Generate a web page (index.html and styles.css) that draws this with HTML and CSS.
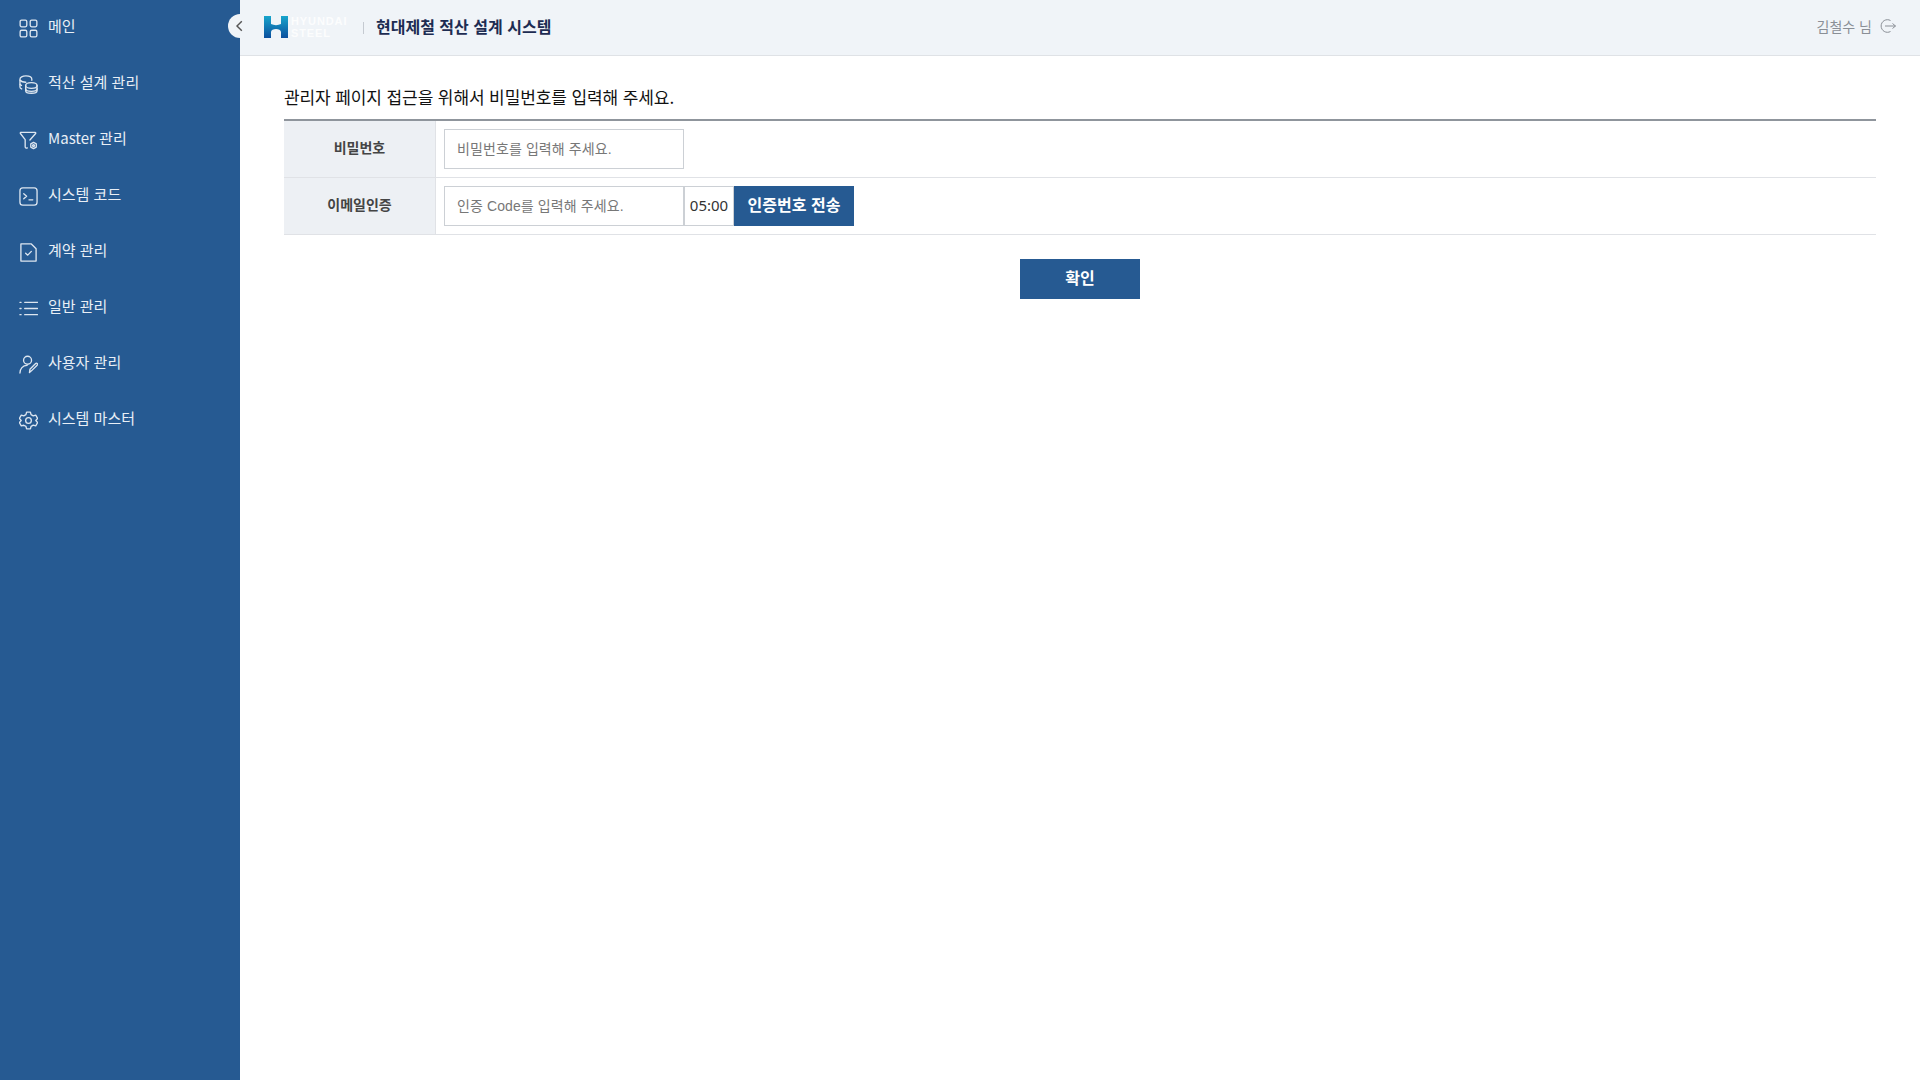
FILE: index.html
```html
<!DOCTYPE html>
<html lang="ko">
<head>
    <meta charset="UTF-8">
    <meta name="viewport" content="width=device-width, initial-scale=1.0">
    <title>현대제철 적산 설계 시스템</title>
    <link rel="stylesheet" href="styles.css">
</head>
<body>
    <div class="layout">
        <!-- Sidebar -->
        <nav class="sidebar">
            <a class="menu-item" href="#">
                <svg class="menu-icon" viewBox="0 0 20 20"><rect x="1.2" y="1.2" width="7" height="7" rx="1.5"/><rect x="11.8" y="1.2" width="7" height="7" rx="1.5"/><rect x="1.2" y="11.8" width="7" height="7" rx="1.5"/><rect x="11.8" y="11.8" width="7" height="7" rx="1.5"/></svg>
                <span>메인</span>
            </a>
            <a class="menu-item" href="#">
                <svg class="menu-icon" viewBox="0 0 20 20"><path d="M13.500 5.500V4.500C13.500 2.300 11 1 7.300 1S1 2.300 1 4.500v8c0 1 .8 1.800 1.800 2.200"/><path d="M1.200 5.500c1 1.300 3.300 2.100 6 2.100"/><path d="M1.200 9.800c.3.500.8.900 1.400 1.200"/><ellipse cx="13" cy="11" rx="6" ry="3"/><path d="M7 11v5.500c0 1.600 2.700 2.700 6 2.700s6-1.100 6-2.700V11"/><path d="M7 14.500c0 1.600 2.700 2.700 6 2.700s6-1.100 6-2.700"/></svg>
                <span>적산 설계 관리</span>
            </a>
            <a class="menu-item" href="#">
                <svg class="menu-icon" viewBox="0 0 20 20"><path d="M2 1.500h15c.6 0 .9.700.5 1.100L11.500 9.500"/><path d="M2 1.500c-.6 0-.9.700-.5 1.100L6.500 9v7.500c0 1.300 1 1.800 2.300 1.300"/><circle cx="15.300" cy="15.300" r="1"/><path d="M15.300 12l2.900 1.600v3.300l-2.900 1.600-2.900-1.600v-3.300z"/></svg>
                <span>Master 관리</span>
            </a>
            <a class="menu-item" href="#">
                <svg class="menu-icon" viewBox="0 0 20 20"><rect x="1" y="1" width="18" height="18" rx="3"/><path d="M5 7l3 2.700-3 2.700"/><path d="M10.500 13.500h4"/></svg>
                <span>시스템 코드</span>
            </a>
            <a class="menu-item" href="#">
                <svg class="menu-icon" viewBox="0 0 20 20"><path d="M2 1h11l5 5v13H2z"/><path d="M7 10.800l2.200 2 3.800-4"/></svg>
                <span>계약 관리</span>
            </a>
            <a class="menu-item" href="#">
                <svg class="menu-icon" viewBox="0 0 20 20"><path d="M1 3.500h1.200M1 10h1.200M1 16.500h1.200M6 3.500h13.500M6 10h13.500M6 16.500h13.500"/></svg>
                <span>일반 관리</span>
            </a>
            <a class="menu-item" href="#">
                <svg class="menu-icon" viewBox="0 0 20 20"><circle cx="9" cy="5.500" r="4.200"/><path d="M1 19c0-4.500 3-8 7.500-8"/><path d="M11 18.500l.5-3.500 6-6c.8-.8 2-.2 2 .8 0 .3-.1.600-.4.900l-6 6z"/></svg>
                <span>사용자 관리</span>
            </a>
            <a class="menu-item" href="#">
                <svg class="menu-icon" viewBox="0 0 20 20"><circle cx="10" cy="10" r="3"/><path d="M8 1.200h4l.7 2.600 2.300 1.300 2.600-.7 2 3.400-1.900 2.200 1.900 2.200-2 3.400-2.600-.7-2.300 1.300-.7 2.600H8l-.7-2.600L5 15l-2.600.7-2-3.400L2.300 10 .4 7.800l2-3.400L5 5.100l2.300-1.300z"/></svg>
                <span>시스템 마스터</span>
            </a>
        </nav>

        <div class="main">
            <!-- Header -->
            <header class="topbar">
                <div class="toggle-btn">
                    <svg viewBox="0 0 10 10"><path d="M6.500 1L2.500 5l4 4"/></svg>
                </div>
                <svg class="logo-mark" viewBox="0 0 24 22">
                    <defs>
                        <linearGradient id="logo-grad" x1="0" y1="0" x2="0" y2="1">
                            <stop offset="0" stop-color="#18a5cc"/>
                            <stop offset="1" stop-color="#0b4f9e"/>
                        </linearGradient>
                    </defs>
                    <path fill="url(#logo-grad)" d="M0 0h7v8c3 1.500 7 1.500 10 0V0h7v22h-7v-6c0-4-10-4-10 0v6H0z"/>
                </svg>
                <div class="logo-text">
                    <span>HYUNDAI</span>
                    <span>STEEL</span>
                </div>
                <div class="topbar-sep"></div>
                <div class="system-title">현대제철 적산 설계 시스템</div>
                <div class="user-box">
                    <span>김철수 님</span>
                    <svg class="logout-icon" viewBox="0 0 16 16"><path d="M10.500 2.500A6.300 6.300 0 1 0 10.500 13.500"/><path d="M5 8h10.500M12.500 5.500L15.500 8l-3 2.500"/></svg>
                </div>
            </header>

            <!-- Content -->
            <div class="content">
                <h2 class="page-msg">관리자 페이지 접근을 위해서 비밀번호를 입력해 주세요.</h2>
                <div class="form-table">
                    <div class="form-row">
                        <div class="form-label">비밀번호</div>
                        <div class="form-field">
                            <input class="text-input" type="password" placeholder="비밀번호를 입력해 주세요.">
                        </div>
                    </div>
                    <div class="form-row">
                        <div class="form-label">이메일인증</div>
                        <div class="form-field">
                            <input class="text-input" type="text" placeholder="인증 Code를 입력해 주세요.">
                            <div class="timer">05:00</div>
                            <button class="btn btn-send" type="button">인증번호 전송</button>
                        </div>
                    </div>
                </div>
                <div class="confirm-wrap">
                    <button class="btn btn-confirm" type="button">확인</button>
                </div>
            </div>
        </div>
    </div>
</body>
</html>
```

FILE: styles.css
```css
* {
    box-sizing: border-box;
}
body {
    margin: 0;
    font-family: "Noto Sans CJK KR", "Noto Sans", sans-serif;
    background-color: #fff;
    color: #222;
}
.layout {
    display: flex;
    height: 1080px;
    overflow: hidden;
}
/* Sidebar */
.sidebar {
    width: 240px;
    flex-shrink: 0;
    background-color: #265a92;
}
.menu-item {
    display: flex;
    align-items: center;
    height: 56px;
    padding: 0 0 0 19px;
    color: #e9eff6;
    font-size: 15px;
    text-decoration: none;
}
.menu-item span {
    padding-bottom: 5px;
}
.menu-icon {
    width: 19px;
    height: 19px;
    margin-right: 10px;
    fill: none;
    stroke: #dde6f0;
    stroke-width: 1.400;
    stroke-linecap: round;
    stroke-linejoin: round;
}
/* Header */
.main {
    flex: 1;
    display: flex;
    flex-direction: column;
}
.topbar {
    position: relative;
    display: flex;
    align-items: center;
    height: 56px;
    padding: 0 24px 1px 24px;
    background-color: #f0f4f8;
    border-bottom: 1px solid #dfe2e6;
}
.toggle-btn {
    position: absolute;
    left: -12px;
    top: 14px;
    display: flex;
    align-items: center;
    justify-content: center;
    width: 24px;
    height: 24px;
    border-radius: 50%;
    background-color: #f0f4f8;
}
.toggle-btn svg {
    width: 12px;
    height: 12px;
    fill: none;
    stroke: #555;
    stroke-width: 1.200;
}
.logo-mark {
    width: 24px;
    height: 22px;
}
.logo-text {
    display: flex;
    flex-direction: column;
    width: 59px;
    margin-left: 3px;
    color: rgba(255, 255, 255, 0.85);
    font-family: "Liberation Sans", sans-serif;
    font-size: 11px;
    font-weight: bold;
    letter-spacing: 0.900px;
    line-height: 12px;
    white-space: nowrap;
}
.topbar-sep {
    width: 1px;
    height: 12px;
    margin: 2px 12px 0 13px;
    background-color: #c5cad1;
}
.system-title {
    padding-bottom: 2px;
    color: #1d2c52;
    font-size: 16px;
    font-weight: 700;
}
.user-box {
    display: flex;
    align-items: center;
    margin-left: auto;
    color: #8a8f96;
    font-size: 14px;
}
.user-box span {
    padding-bottom: 2px;
}
.logout-icon {
    width: 16px;
    height: 16px;
    margin-left: 8px;
    margin-bottom: 3px;
    fill: none;
    stroke: #8a8f96;
    stroke-width: 1;
}
/* Content */
.content {
    padding: 29px 44px 0 44px;
}
.page-msg {
    margin: 0 0 10px 0;
    height: 24px;
    font-size: 17px;
    font-weight: 400;
    line-height: 24px;
    letter-spacing: -0.100px;
    color: #111;
}
.form-table {
    border-top: 2px solid #8f959c;
}
.form-row {
    display: flex;
    height: 57px;
    border-bottom: 1px solid #e0e2e6;
}
.form-label {
    display: flex;
    align-items: center;
    justify-content: center;
    width: 152px;
    padding-bottom: 4px;
    background-color: #edf0f4;
    border-right: 1px solid #e0e2e6;
    color: #444;
    font-size: 14px;
    font-weight: 700;
}
.form-field {
    display: flex;
    align-items: center;
    padding-left: 8px;
}
.text-input {
    width: 240px;
    height: 40px;
    padding: 0 12px;
    border: 1px solid #ccd0d5;
    font-family: "Liberation Sans", "Noto Sans CJK KR", sans-serif;
    font-size: 14px;
    letter-spacing: 0.100px;
}
.text-input::placeholder {
    color: #777;
}
.timer {
    display: flex;
    align-items: center;
    justify-content: center;
    width: 50px;
    height: 40px;
    padding: 0 0 2px 0;
    border: 1px solid #ccd0d5;
    border-left: 1px solid #ccd0d5;
    color: #333;
    font-family: "Noto Sans", sans-serif;
    font-size: 15px;
}
.btn {
    height: 40px;
    padding: 0 0 4px 0;
    border: none;
    background-color: #265a92;
    color: #fff;
    font-family: inherit;
    font-size: 16px;
    font-weight: 700;
    cursor: pointer;
}
.btn-send {
    width: 120px;
}
.btn-confirm {
    width: 120px;
}
.confirm-wrap {
    display: flex;
    justify-content: center;
    margin-top: 24px;
}
```
